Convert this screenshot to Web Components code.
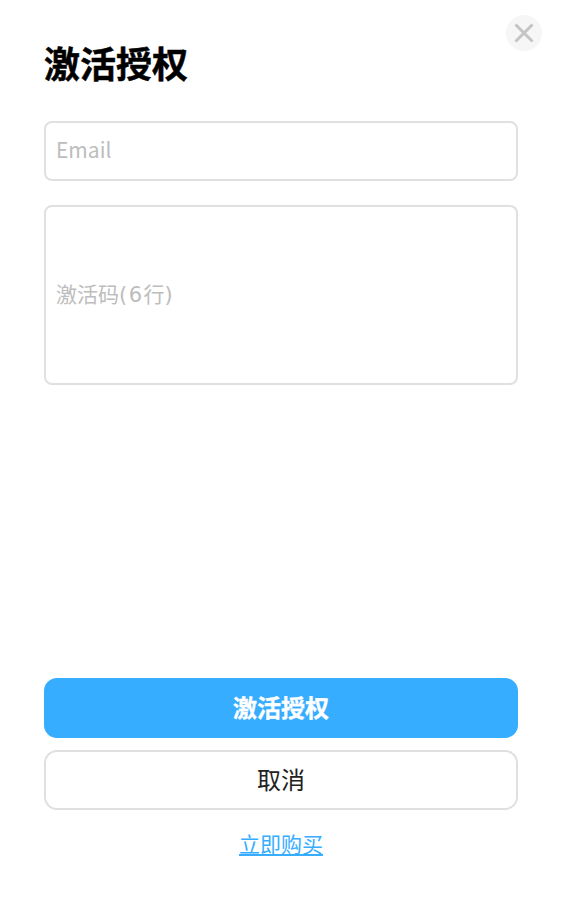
<!DOCTYPE html>
<html lang="zh">
<head>
<meta charset="utf-8">
<title>激活授权</title>
<style>
  html, body { margin: 0; height: 100%; background: #fff; }
  body { font-family: "Noto Sans CJK SC", "Noto Sans", sans-serif; }
  /* the brackets and digit of the placeholder are set wider than the CJK font's own */
  .wide { font-family: "DejaVu Sans", sans-serif; font-size: 21px; letter-spacing: 1.5px; }
</style>
</head>
<body>
<activate-dialog>
  <span slot="title">激活授权</span>
  <text-field slot="fields">Email</text-field>
  <text-field slot="fields" tall><span>激活码<span class="wide">(6</span>行<span class="wide">)</span></span></text-field>
  <action-button slot="actions" primary>激活授权</action-button>
  <action-button slot="actions">取消</action-button>
  <a slot="link" href="#">立即购买</a>
</activate-dialog>

<script>
// <close-button> round grey x in the corner of the dialog
class CloseButton extends HTMLElement {
  constructor() {
    super();
    this.attachShadow({ mode: 'open' }).innerHTML = `
      <style>
        :host {
          position: absolute;
          top: 15px;
          right: 21px;
          width: 36px;
          height: 36px;
          border-radius: 50%;
          background: #f6f6f6;
          display: flex;
          align-items: center;
          justify-content: center;
        }
        svg { display: block; }
      </style>
      <svg width="36" height="36" viewBox="0 0 36 36" fill="none" stroke="#c4c4c4" stroke-width="3">
        <path d="M9.5 9.5 L26.5 26.5 M26.5 9.5 L9.5 26.5"/>
      </svg>`;
  }
}
customElements.define('close-button', CloseButton);

// <text-field> bordered box with placeholder text
class TextField extends HTMLElement {
  constructor() {
    super();
    this.attachShadow({ mode: 'open' }).innerHTML = `
      <style>
        :host {
          display: flex;
          align-items: center;
          box-sizing: border-box;
          height: 60px;
          padding: 0 10px 4px;
          border: 2px solid #e0e0e0;
          border-radius: 8px;
          color: #bdbdbd;
          font-size: 21px;
        }
        :host([tall]) { height: 180px; }
      </style>
      <slot></slot>`;
  }
}
customElements.define('text-field', TextField);

// <action-button> primary = filled blue, otherwise outlined
class ActionButton extends HTMLElement {
  constructor() {
    super();
    this.attachShadow({ mode: 'open' }).innerHTML = `
      <style>
        :host {
          display: flex;
          align-items: center;
          justify-content: center;
          box-sizing: border-box;
          height: 60px;
          padding-bottom: 3px;
          border: 2px solid #e0e0e0;
          border-radius: 13px;
          background: #fff;
          color: #222;
          font-size: 24px;
        }
        :host([primary]) {
          border-color: #36adff;
          background: #36adff;
          color: #fff;
          font-weight: 700;
          -webkit-text-stroke: 0.4px #fff;
        }
      </style>
      <slot></slot>`;
  }
}
customElements.define('action-button', ActionButton);

// <activate-dialog> whole page: title, fields, actions at the bottom
class ActivateDialog extends HTMLElement {
  constructor() {
    super();
    this.attachShadow({ mode: 'open' }).innerHTML = `
      <style>
        :host {
          display: flex;
          flex-direction: column;
          position: relative;
          box-sizing: border-box;
          height: 899px;
          padding: 34px 45px 39px 44px;
        }
        .title {
          margin: 0 0 31px;
          font-size: 36px;
          line-height: 56px;
          font-weight: 700;
          color: #000;
          -webkit-text-stroke: 0.5px #000;
        }
        .fields {
          display: flex;
          flex-direction: column;
          gap: 24px;
        }
        .actions {
          display: flex;
          flex-direction: column;
          gap: 12px;
          margin-top: auto;
        }
        .link {
          margin-top: 16px;
          text-align: center;
          font-size: 21px;
          line-height: 34px;
        }
        ::slotted(a) { color: #36adff; }
      </style>
      <close-button></close-button>
      <h1 class="title"><slot name="title"></slot></h1>
      <div class="fields"><slot name="fields"></slot></div>
      <div class="actions"><slot name="actions"></slot></div>
      <div class="link"><slot name="link"></slot></div>`;
  }
}
customElements.define('activate-dialog', ActivateDialog);
</script>
</body>
</html>
